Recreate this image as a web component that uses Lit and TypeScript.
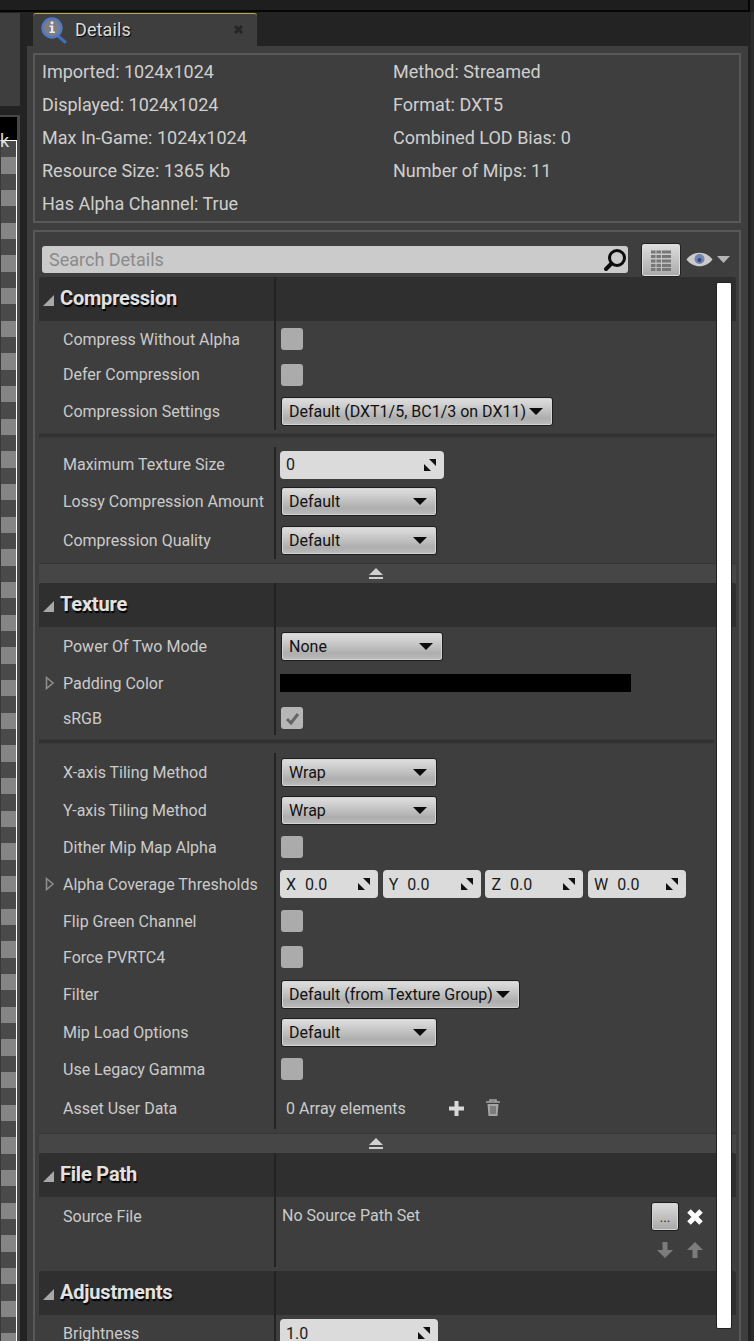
import { LitElement, html, css, svg } from "lit";
import { customElement } from "lit/decorators.js";

const spin = svg`<svg class="spin" width="14" height="14" viewBox="0 0 14 14"><path d="M1 6V13H8Z" fill="#111"/><path d="M6 1H13V8Z" fill="#111"/></svg>`;
const caret = svg`<svg class="caret" width="14" height="7" viewBox="0 0 14 7"><path d="M0 0H14L7 7Z" fill="#0c0c0c"/></svg>`;

type Row = { label: string; h: number; v: unknown; expand?: boolean; top?: boolean };

@customElement("app-root")
export class AppRoot extends LitElement {
  static styles = css`
    :host { display: block; width: 754px; height: 1341px; overflow: hidden; background: #232323; font-family: Roboto, "Liberation Sans", sans-serif; color: #d4d4d4; }
    .top { height: 10px; background: #1e1e1e; border-bottom: 2px solid #050505; margin-right: 4px; border-right: 2px solid #050505; }
    .body { display: flex; height: 1329px; }
    .left { width: 27px; flex: none; display: flex; flex-direction: column; margin-top: 1px; }
    .lp { width: 20px; height: 93px; background: #3e3e3e; flex: none; }
    .vp { margin-top: 9px; width: 20px; flex: 1; background: #474747; padding-top: 2px; }
    .black { width: 17px; height: 23px; background: #000; position: relative; }
    .k { position: absolute; left: 0; top: 15px; z-index: 1; font-size: 18px; line-height: 18px; color: #ddd; }
    .checker { width: 15px; border-top: 1px solid #fff; border-right: 1px solid #fff; border-left: 1px solid #3a3a3a; height: 1250px; background: repeating-linear-gradient(180deg, #4a4a4a 0 16.33px, #858585 16.33px 32.67px); }
    .main { width: 721px; flex: none; display: flex; flex-direction: column; }
    .tabs { height: 33px; flex: none; padding-left: 6px; display: flex; margin-top: 1px; }
    .tab { width: 224px; height: 33px; background: #3e3e3e; border-top: 1px solid #b9a94a; box-sizing: border-box; display: flex; align-items: center; padding-left: 8px; position: relative; border-radius: 3px 3px 0 0; }
    .tab span { font-size: 18px; margin-left: 8px; margin-top: -2px; letter-spacing: .1px; text-shadow: 1px 1px 1px #000; color: #dcdcdc; }
    .tab .x { position: absolute; left: 200px; top: 10px; }
    .panel { background: #3e3e3e; flex: 1; padding: 7px 7px 0 6px; }
    .info { box-sizing: border-box; width: 708px; height: 170px; border: 2px solid #585858; padding: 0 0 0 7px; display: grid; grid-template-columns: 351px 1fr; grid-auto-rows: 33px; font-size: 18px; line-height: 33px; color: #cfcfcf; }
    .frame { position: relative; box-sizing: border-box; width: 708px; margin-top: 7px; height: 1200px; border: 2px solid #585858; border-bottom: none; padding: 15px 0 0 7px; }
    .search { display: flex; align-items: center; height: 31px; margin-bottom: 2px; margin-top: -3px; }
    .sbox { width: 586px; height: 27px; background: #cbcbcb; border-radius: 3px; box-sizing: border-box; padding: 0 7px; display: flex; align-items: center; justify-content: space-between; font-size: 18px; color: #8a8a8a; }
    .sbox svg { margin-right: -7px; }
    .viewbtn { width: 40px; height: 34px; margin-left: 13px; box-sizing: border-box; border: 1px solid #222; border-radius: 3px; background: linear-gradient(#dedede, #a9a9a9); display: flex; align-items: center; justify-content: center; box-shadow: inset 0 0 0 1px #ddd; }
    .eye { margin-left: 5px; display: flex; align-items: center; gap: 4px; }
    .content { margin-left: -3px; width: 697px; }
    .hdr { height: 44px; background: #2f2f2f; display: flex; border-radius: 3px 3px 0 0; position: relative; }
    .hdr .name { width: 235px; display: flex; align-items: center; font-size: 20px; font-weight: 700; color: #e2e2e2; text-shadow: 1px 2px 1px #000; box-sizing: border-box; padding: 0 0 2px 21px; position: relative; letter-spacing: -.2px; }
    .hdr .tri { position: absolute; left: 4px; top: 18px; width: 0; height: 0; border-left: 11px solid transparent; border-bottom: 11px solid #a8a8a8; }
    .hdr .div { width: 2px; background: #232323; }
    .row { display: flex; width: 677px; align-items: center; position: relative; }
    .row.topped { align-items: stretch; }
    .row.topped .lbl { padding-top: 10px; }
    .row.topped .val { align-items: stretch; }
    .lbl { width: 235px; box-sizing: border-box; padding-left: 24px; font-size: 16px; color: #cbcbcb; white-space: nowrap; flex: none; }
    .dv { width: 2px; align-self: stretch; background: #232323; flex: none; }
    .val { padding-left: 4px; display: flex; align-items: center; gap: 5px; flex: 1; min-width: 0; }
    .nums { display: flex; gap: 4.7px; }
    .exp { position: absolute; left: 6px; top: 50%; margin-top: -7px; }
    .cb { width: 22px; height: 22px; margin-left: 1px; border-radius: 3px; background: #ababab; display: flex; align-items: center; justify-content: center; }
    .cb.on { background: #b6b6b6; }
    .combo { box-sizing: border-box; height: 29px; border: 1px solid #1d1d1d; border-radius: 3px; background: linear-gradient(#dedede, #d4d4d4 20%, #aeaeae 75%, #bcbcbc); box-shadow: inset 0 0 0 1px #d4d4d4; color: #111; font-size: 16px; display: flex; align-items: center; justify-content: space-between; padding: 0 9px 0 7px; white-space: nowrap; margin-left: 1px; }
    .num { box-sizing: border-box; height: 28px; border-radius: 4px; background: #dbdbdb; color: #1a1a1a; font-size: 16px; display: flex; align-items: center; justify-content: space-between; padding: 0 7px 0 6px; }
    .num .ax { margin-right: 9px; display: inline-block; }
    .num .spin { flex: none; }
    .color { width: 351px; height: 18px; background: #000; }
    .sep { height: 5px; width: 675px; background: linear-gradient(#3e3e3e, #2e2e2e 40%, #3a3a3a); }
    .bar { height: 20px; width: 697px; background: #464646; border-top: 1px solid #363636; box-sizing: border-box; display: flex; align-items: center; justify-content: center; }
    .bar svg { margin-left: -24px; }
    .sb { position: absolute; left: 681px; top: 50px; width: 16px; height: 1047px; background: #fff; border: 1px solid #222; box-sizing: border-box; border-radius: 2px; }
    .edge { width: 3px; flex: none; background: #2c2c2c; border-left: 3px solid #232323; }
    .plain { font-size: 16px; color: #cbcbcb; white-space: nowrap; }
    .src { position: relative; width: 100%; padding-top: 9px; box-sizing: border-box; }
    .srcbtns { position: absolute; right: 12px; top: 5px; display: grid; grid-template-columns: 28px 18px; column-gap: 7px; row-gap: 10px; justify-items: center; align-items: center; }
    .dots { width: 28px; height: 29px; box-sizing: border-box; border: 1px solid #1d1d1d; border-radius: 3px; background: linear-gradient(#dcdcdc, #a8a8a8); color: #222; font-size: 13px; text-align: center; line-height: 30px; box-shadow: inset 0 0 0 1px #d4d4d4; }
  `;

  hdr(name: string) {
    return html`<div class="hdr"><div class="name"><i class="tri"></i>${name}</div><div class="div"></div></div>`;
  }
  cb(on = false) {
    return html`<div class="cb ${on ? "on" : ""}">${on ? svg`<svg width="15" height="13" viewBox="0 0 15 13"><path d="M2 7L6 11L13 2" fill="none" stroke="#666" stroke-width="3"/></svg>` : ""}</div>`;
  }
  combo(t: string, w: number) {
    return html`<div class="combo" style="width:${w}px"><span>${t}</span>${caret}</div>`;
  }
  num(t: string, w: number, ax = "") {
    return html`<div class="num" style="width:${w}px"><span>${ax ? html`<span class="ax">${ax}</span>` : ""}${t}</span>${spin}</div>`;
  }
  rows(rs: Row[]) {
    return rs.map(
      (r) => html`<div class="row ${r.top ? "topped" : ""}" style="height:${r.h}px">
        ${r.expand ? svg`<svg class="exp" width="10" height="14" viewBox="0 0 10 14"><path d="M1.5 1.5L8 7L1.5 12.5Z" fill="none" stroke="#8d8d8d" stroke-width="1.6"/></svg>` : ""}
        <div class="lbl">${r.label}</div><div class="dv"></div><div class="val">${r.v}</div></div>`
    );
  }
  bar() {
    return html`<div class="bar"><svg width="16" height="12" viewBox="0 0 16 12"><path d="M8 0L15 7H1Z" fill="#d0d0d0"/><rect x="1" y="9" width="14" height="2" fill="#d0d0d0"/></svg></div>`;
  }
  render() {
    const info = [
      ["Imported: 1024x1024", "Method: Streamed"],
      ["Displayed: 1024x1024", "Format: DXT5"],
      ["Max In-Game: 1024x1024", "Combined LOD Bias: 0"],
      ["Resource Size: 1365 Kb", "Number of Mips: 11"],
      ["Has Alpha Channel: True", ""],
    ];
    return html`
      <div class="top"></div>
      <div class="body">
        <div class="left">
          <div class="lp"></div>
          <div class="vp">
            <div class="black"><span class="k">k</span></div>
            <div class="checker"></div>
          </div>
        </div>
        <div class="main">
          <div class="tabs">
            <div class="tab">
              <svg width="26" height="27" viewBox="0 0 26 27">
                <path d="M16 18L24 25" stroke="#3f6fc0" stroke-width="3" stroke-linecap="round"/>
                <circle cx="11" cy="11" r="9.5" fill="#7d7d82" stroke="#4f78c8" stroke-width="2.4"/>
                <circle cx="11" cy="5.8" r="1.6" fill="#e8e8e8"/>
                <path d="M8.5 8.5H12.3V14.6H14V16H8.5V14.6H10V10H8.5Z" fill="#e8e8e8"/>
              </svg>
              <span>Details</span>
              <svg class="x" width="11" height="11" viewBox="0 0 11 11"><path d="M2 2L9 9M9 2L2 9" stroke="#262626" stroke-width="3"/></svg>
            </div>
          </div>
          <div class="panel">
            <div class="info">${info.map((r) => html`<div>${r[0]}</div><div>${r[1]}</div>`)}</div>
            <div class="frame">
              <div class="search">
                <div class="sbox">Search Details
                  <svg width="26" height="26" viewBox="0 0 26 26"><circle cx="15" cy="11" r="7.5" fill="none" stroke="#0c0c0c" stroke-width="3"/><path d="M9.5 16.5L4 22" stroke="#0c0c0c" stroke-width="4" stroke-linecap="round"/></svg>
                </div>
                <div class="viewbtn">
                  <svg width="22" height="22" viewBox="0 0 22 22"><path d="M1 3H21M1 7.5H21M1 12H21M1 16.5H21M1 20.5H21" stroke="#777" stroke-width="3"/><path d="M6 1V22M11.5 1V22" stroke="#c4c4c4" stroke-width="1"/></svg>
                </div>
                <div class="eye">
                  <svg width="27" height="15" viewBox="0 0 27 15"><path d="M0.5 7.5C7 -1.5 20 -1.5 26.5 7.5C20 16.5 7 16.5 0.5 7.5Z" fill="#cbcbcb"/><circle cx="13.5" cy="7" r="5" fill="#7185b0"/><circle cx="13.5" cy="8" r="2" fill="#33487a"/></svg>
                  <svg width="13" height="7" viewBox="0 0 13 7"><path d="M0 0H13L6.5 7Z" fill="#b5b5b5"/></svg>
                </div>
              </div>
              <div class="content">
                ${this.hdr("Compression")}
                ${this.rows([
                  { label: "Compress Without Alpha", h: 36, v: this.cb() },
                  { label: "Defer Compression", h: 35, v: this.cb() },
                  { label: "Compression Settings", h: 38, v: this.combo("Default (DXT1/5, BC1/3 on DX11)", 272) },
                ])}
                <div class="sep" style="margin-top:3px"></div><div style="height:9px"></div>
                ${this.rows([
                  { label: "Maximum Texture Size", h: 35, v: this.num("0", 164) },
                  { label: "Lossy Compression Amount", h: 39, v: this.combo("Default", 156) },
                  { label: "Compression Quality", h: 38, v: this.combo("Default", 156) },
                ])}
                <div style="height:4px"></div>
                ${this.bar()}
                ${this.hdr("Texture")}
                ${this.rows([
                  { label: "Power Of Two Mode", h: 38, v: this.combo("None", 162) },
                  { label: "Padding Color", h: 36, expand: true, v: html`<div class="color"></div>` },
                  { label: "sRGB", h: 34, v: this.cb(true) },
                ])}
                <div class="sep" style="margin-top:4px"></div><div style="height:9px"></div>
                ${this.rows([
                  { label: "X-axis Tiling Method", h: 38, v: this.combo("Wrap", 156) },
                  { label: "Y-axis Tiling Method", h: 38, v: this.combo("Wrap", 156) },
                  { label: "Dither Mip Map Alpha", h: 36, v: this.cb() },
                  { label: "Alpha Coverage Thresholds", h: 38, expand: true, v: html`<div class="nums">${this.num("0.0", 98, "X")}${this.num("0.0", 98, "Y")}${this.num("0.0", 98, "Z")}${this.num("0.0", 98, "W")}</div>` },
                  { label: "Flip Green Channel", h: 36, v: this.cb() },
                  { label: "Force PVRTC4", h: 36, v: this.cb() },
                  { label: "Filter", h: 38, v: this.combo("Default (from Texture Group)", 239) },
                  { label: "Mip Load Options", h: 38, v: this.combo("Default", 156) },
                  { label: "Use Legacy Gamma", h: 36, v: this.cb() },
                  { label: "Asset User Data", h: 42, v: html`<span class="plain" style="margin-left:6px">0 Array elements</span>
                    <svg style="margin-left:37px" width="17" height="17" viewBox="0 0 17 17"><path d="M8.5 1V16M1 8.5H16" stroke="#d8d8d8" stroke-width="4"/></svg>
                    <svg style="margin-left:15px" width="16" height="18" viewBox="0 0 16 18"><path d="M1 3H15M5 2.5V1H11V2.5" stroke="#a5a5a5" stroke-width="1.6" fill="none"/><path d="M2.5 5H13.5L12.5 17H3.5Z" fill="#a5a5a5"/><path d="M6 7V15M8 7V15M10 7V15" stroke="#555" stroke-width="1"/></svg>` },
                ])}
                <div style="height:4px"></div>
                ${this.bar()}
                ${this.hdr("File Path")}
                ${this.rows([
                  { label: "Source File", h: 70, top: true, v: html`<div class="src"><span class="plain" style="margin-left:2px">No Source Path Set</span>
                    <div class="srcbtns">
                      <div class="dots">...</div>
                      <svg width="18" height="18" viewBox="0 0 18 18"><path d="M3 3L15 15M15 3L3 15" stroke="#fff" stroke-width="5"/></svg>
                      <svg width="18" height="18" viewBox="0 0 18 18"><path d="M6.5 1H11.5V9H17L9 17L1 9H6.5Z" fill="#7c7c7c"/></svg>
                      <svg width="18" height="18" viewBox="0 0 18 18"><path d="M6.5 17H11.5V9H17L9 1L1 9H6.5Z" fill="#7c7c7c"/></svg>
                    </div></div>` },
                ])}
                <div style="height:4px"></div>
                ${this.hdr("Adjustments")}
                ${this.rows([{ label: "Brightness", h: 36, v: this.num("1.0", 158) }])}
              </div>
              <div class="sb"></div>
            </div>
          </div>
        </div>
        <div class="edge"></div>
      </div>
    `;
  }
}
